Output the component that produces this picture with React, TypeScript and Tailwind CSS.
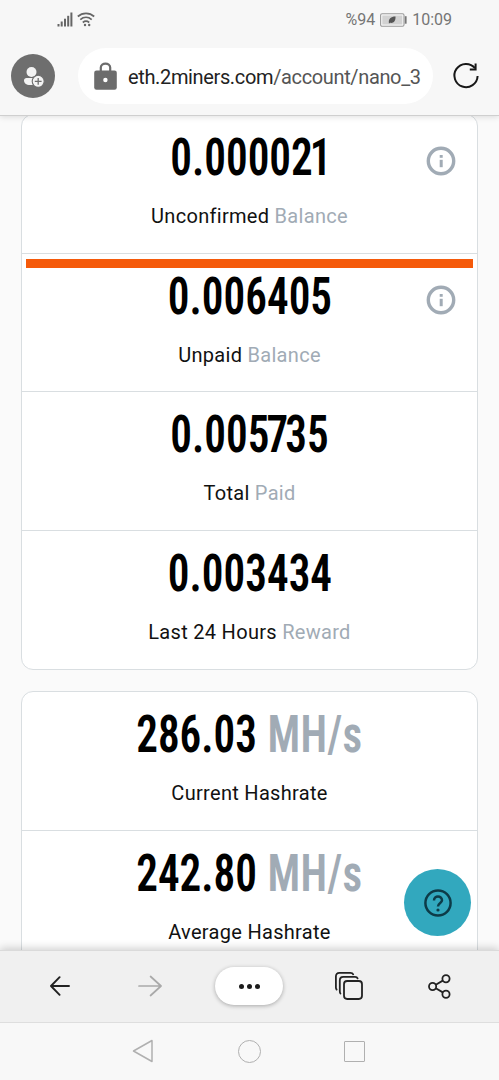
import React from "react";

type Stat = {
  value: string;
  kerned?: string;
  rest?: string;
  unit?: string;
  label: string;
  muted?: string;
  info?: boolean;
  marked?: boolean;
};

const balances: Stat[] = [
  { value: "0.0000", kerned: "21", label: "Unconfirmed", muted: "Balance", info: true },
  { value: "0.006405", label: "Unpaid", muted: "Balance", info: true, marked: true },
  { value: "0.00", kerned: "57", rest: "35", label: "Total", muted: "Paid" },
  { value: "0.003434", label: "Last 24 Hours", muted: "Reward" },
];

const hashrates: Stat[] = [
  { value: "286.03", unit: "MH/s", label: "Current Hashrate" },
  { value: "242.80", unit: "MH/s", label: "Average Hashrate" },
];

function InfoIcon() {
  return (
    <svg className="absolute right-[21px] top-[31px] size-[30px]" viewBox="0 0 30 30" fill="none">
      <circle cx="15" cy="15" r="12.7" stroke="#a1abb5" strokeWidth="3.4" />
      <path d="M15.2 13.8v7.4" stroke="#a1abb5" strokeWidth="3" />
      <path d="M15.2 9v2.8" stroke="#a1abb5" strokeWidth="3" />
    </svg>
  );
}

function StatRow({ stat }: { stat: Stat }) {
  return (
    <div className="relative flex h-[138.5px] shrink-0 flex-col items-center border-b border-[#d9dee1] last:border-b-0">
      {stat.marked && <div className="absolute left-[4px] right-[4px] top-[5px] h-[9px] bg-[#f55a0a]" />}
      <div className="mt-[12px] flex h-[62px] scale-x-[0.83] items-center whitespace-pre text-[52px] font-[650] leading-[62px] text-black [font-stretch:75%]">
        <span>
          {stat.value}
          {stat.kerned && <span className="tracking-[-3.5px]">{stat.kerned}</span>}
          {stat.rest}
        </span>
        {stat.unit && <span className="font-[560] tracking-[0.5px] text-[#a1abb5]"> {stat.unit}</span>}
      </div>
      <div className="mt-[12px] text-[20px] leading-[30px] tracking-[0.3px] text-[#111]">
        {stat.label}
        {stat.muted && <span className="text-[#a1abb5]"> {stat.muted}</span>}
      </div>
      {stat.info && <InfoIcon />}
    </div>
  );
}

function StatusBar() {
  return (
    <div className="flex h-[38px] items-center justify-between pl-[57px] pr-[47px] text-[#757575]">
      <div className="flex items-center gap-[4px]">
        <svg width="16" height="15" viewBox="0 0 16 15" fill="#666">
          <rect x="0.5" y="12" width="2" height="2.5" />
          <rect x="3.7" y="9.5" width="2" height="5" />
          <rect x="7" y="6.7" width="2" height="7.8" />
          <rect x="10.2" y="3.8" width="2" height="10.7" />
          <rect x="13.4" y="0.5" width="2" height="14" />
        </svg>
        <svg width="18" height="15" viewBox="0 0 18 15" fill="none" stroke="#666" strokeWidth="1.7">
          <path d="M0.8 4.5C5.5 0.2 12.5 0.2 17.2 4.5" />
          <path d="M3.3 7.6C6.7 4.7 11.3 4.7 14.7 7.6" />
          <path d="M5.8 10.5C7.8 8.9 10.2 8.9 12.2 10.5" />
          <circle cx="8" cy="13" r="1.2" fill="#666" stroke="none" />
          <circle cx="12.2" cy="13" r="1.2" fill="#666" stroke="none" />
        </svg>
      </div>
      <div className="flex items-center pt-[1px] text-[16px] leading-none">
        <span>%94</span>
        <svg className="ml-[5px] mr-[5px]" width="27" height="14" viewBox="0 0 27 14">
          <rect x="0.6" y="0.8" width="23.4" height="12.4" rx="1.5" fill="#f7f7f7" stroke="#9a9a9a" strokeWidth="1.1" />
          <rect x="2.3" y="2.5" width="20" height="9" fill="#d2d2d2" />
          <path d="M9 10.5C8 6 11 3.5 15.5 3.5C15.8 8 13.5 10.6 10 9.8Z" fill="#555" />
          <rect x="24.8" y="3.2" width="1.8" height="7.5" fill="#777" />
        </svg>
        <span>10:09</span>
      </div>
    </div>
  );
}

function AddressBar() {
  return (
    <div className="flex h-[76px] items-center pl-[11px] pr-[19px]">
      <div className="grid size-[44px] place-items-center rounded-full bg-[#6e6e6e]">
        <svg width="44" height="44" viewBox="0 0 44 44">
          <circle cx="20.5" cy="18" r="5" fill="#f3f3f3" />
          <path d="M15.5 24H27V31H19C15 31 13 29 13 26.5C13 25 14 24 15.5 24Z" fill="#f3f3f3" />
          <circle cx="27.2" cy="27.3" r="6" fill="#f3f3f3" stroke="#6e6e6e" strokeWidth="1.1" />
          <path d="M23.8 27.3h6.8M27.2 23.9v6.8" stroke="#6e6e6e" strokeWidth="1.3" />
        </svg>
      </div>
      <div className="ml-[23px] flex h-[56px] w-[355px] items-center rounded-full bg-white pl-[16px]">
        <svg width="23" height="28" viewBox="0 0 23 28">
          <path d="M6.8 9V5.6C6.8 0.2 16.2 0.2 16.2 5.6V9" fill="none" stroke="#6c6c6c" strokeWidth="2.2" />
          <rect x="0.2" y="8.4" width="22.6" height="19.4" rx="2.3" fill="#6c6c6c" />
          <circle cx="11.4" cy="18" r="2.2" fill="#fff" />
        </svg>
        <div className="ml-[11px] mt-[2px] whitespace-nowrap text-[20px] leading-[30px] tracking-[-0.36px] text-[#222]">
          eth.2miners.com<span className="text-[#555]">/account/nano_3</span>
        </div>
      </div>
      <svg className="ml-auto" width="28" height="28" viewBox="0 0 28 28" fill="none" stroke="#181818" strokeWidth="2">
        <path d="M23 6.2A11.6 11.6 0 1 0 25.6 14" />
        <path d="M23.6 1.6V7.4H17.8" />
      </svg>
    </div>
  );
}

function BrowserToolbar() {
  return (
    <div className="relative z-10 grid h-[72px] shrink-0 grid-cols-[120px_60px_138px_61px_120px] items-center justify-items-center border-t border-[#dadada] bg-[#f0f0f0] pb-[1px] shadow-[0_-2px_8px_rgba(0,0,0,0.18)]">
      <svg width="20" height="20" viewBox="0 0 20 20" fill="none" stroke="#222" strokeWidth="1.9" strokeLinecap="round" strokeLinejoin="round">
        <path d="M19 10H1.2M9.6 1.2L1 10L9.6 18.8" />
      </svg>
      <svg width="24" height="22" viewBox="0 0 24 22" fill="none" stroke="#a9a9a9" strokeWidth="1.7" strokeLinecap="round" strokeLinejoin="round">
        <path d="M1 11H23M12.6 1.5L23 11L12.6 20.5" />
      </svg>
      <div className="flex h-[38px] w-[68px] items-center justify-center gap-[3px] rounded-full bg-white shadow-[0_1px_4px_rgba(0,0,0,0.3)]">
        <i className="size-[5px] rounded-full bg-[#1c1c1c]" />
        <i className="size-[5px] rounded-full bg-[#1c1c1c]" />
        <i className="size-[5px] rounded-full bg-[#1c1c1c]" />
      </div>
      <svg width="28" height="28" viewBox="0 0 28 28" fill="none" stroke="#222" strokeWidth="1.8" strokeLinecap="round">
        <rect x="9" y="9" width="18" height="18" rx="3.2" />
        <path d="M5.4 21.5C4.8 20.8 4.8 20 4.8 19V8.4Q4.8 4.9 8.3 4.9H20Q22 4.9 22.6 6.4" />
        <path d="M1.6 17.5Q0.9 16.8 0.9 15.5V4.4Q0.9 0.9 4.4 0.9H15.5Q17.5 0.9 18.2 2.3" />
      </svg>
      <svg width="23" height="25" viewBox="0 0 23 25" fill="none" stroke="#222" strokeWidth="1.8">
        <circle cx="4.6" cy="12.5" r="3.6" />
        <circle cx="18" cy="4.8" r="3.6" />
        <circle cx="18" cy="20.2" r="3.6" />
        <path d="M7.8 10.7L14.8 6.6M7.8 14.3L14.8 18.4" />
      </svg>
    </div>
  );
}

function SystemNav() {
  return (
    <div className="relative z-10 flex h-[58px] shrink-0 items-center border-t border-[#dedede] bg-[#f8f8f8] pb-[1px] pl-[132px]">
      <svg width="22" height="24" viewBox="0 0 22 24" fill="none" stroke="#b0b0b0" strokeWidth="1.5" strokeLinejoin="round">
        <path d="M1.5 12L20 1.5V22.5Z" />
      </svg>
      <div className="ml-[84px] size-[23px] rounded-full border-[1.5px] border-[#b0b0b0]" />
      <div className="ml-[83px] size-[21px] rounded-[1px] border-[1.5px] border-[#b0b0b0]" />
    </div>
  );
}

export default function App() {
  return (
    <div className="relative flex h-[1080px] w-[499px] flex-col overflow-hidden bg-[#fafafa] font-['Roboto',sans-serif]">
      <header className="relative z-10 h-[116px] shrink-0 border-b border-[#cfcfcf] bg-[#f7f7f7] shadow-[0_1px_6px_rgba(0,0,0,0.13)]">
        <StatusBar />
        <AddressBar />
      </header>
      <main className="flex min-h-0 flex-1 flex-col gap-[21px] overflow-hidden px-[21px]">
        <section className="-mt-[2px] flex shrink-0 flex-col rounded-[12px] border border-[#d9dee1] bg-white">
          {balances.map((s) => (
            <StatRow key={s.label} stat={s} />
          ))}
        </section>
        <section className="flex shrink-0 flex-col rounded-[12px] border border-[#d9dee1] bg-white">
          {hashrates.map((s) => (
            <StatRow key={s.label} stat={s} />
          ))}
        </section>
      </main>
      <button className="absolute left-[404px] top-[869px] z-20 grid size-[67px] place-items-center rounded-full bg-[#32a8be]">
        <svg width="28" height="28" viewBox="0 0 28 28" fill="none" stroke="#0d3b48" strokeWidth="2.5">
          <circle cx="14" cy="14" r="12.6" />
          <path d="M10 11.4C10 6.3 18 6.3 18 11.3C18 14 14 14 14 17.6" />
          <circle cx="14" cy="21" r="1.6" fill="#0d3b48" stroke="none" />
        </svg>
      </button>
      <BrowserToolbar />
      <SystemNav />
    </div>
  );
}
